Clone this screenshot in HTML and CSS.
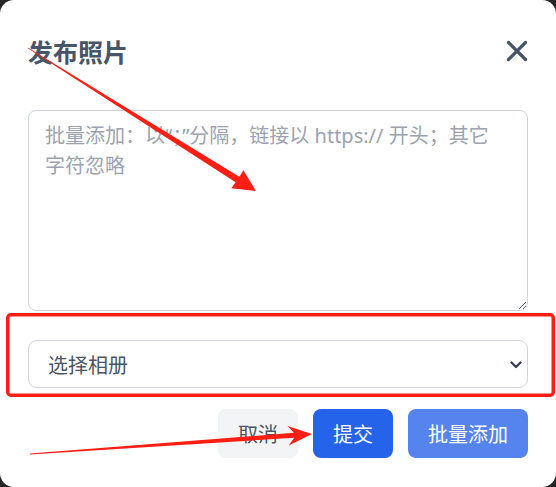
FILE: index.html
```html
<!DOCTYPE html>
<html lang="zh-CN">
<head>
<meta charset="utf-8">
<link rel="stylesheet" href="styles.css">
</head>
<body>
<div class="modal">
  <div class="header">
    <h2 class="title">发布照片</h2>
    <button class="close" aria-label="关闭">
      <svg width="22" height="22" viewBox="0 0 22 22"><path d="M2.5 2.5 L19.5 19.5 M19.5 2.5 L2.5 19.5" stroke="#475569" stroke-width="3.2" stroke-linecap="round"/></svg>
    </button>
  </div>
  <textarea class="links" placeholder="批量添加：以“；”分隔，链接以 https:// 开头；其它字符忽略"></textarea>
  <div class="select-wrap">
    <select class="album"><option>选择相册</option></select>
    <svg class="chev" width="12" height="8" viewBox="0 0 12 8"><path d="M1.5 1.5 L6 6 L10.5 1.5" fill="none" stroke="#374151" stroke-width="2.4" stroke-linecap="round" stroke-linejoin="round"/></svg>
  </div>
  <div class="actions">
    <button class="btn btn-cancel">取消</button>
    <button class="btn btn-primary">提交</button>
    <button class="btn btn-batch">批量添加</button>
  </div>
  <svg class="annot" width="556" height="487" viewBox="0 0 556 487">
    <rect x="7.75" y="314.75" width="545.5" height="80.5" rx="3" fill="none" stroke="#fe1f14" stroke-width="3.5"/>
    <polygon fill="#fe1f14" points="27.8,48.3 235.6,182.2 231.3,188.2 256,191 243.4,170.2 239.4,176.8 28.2,47.7"/>
    <polygon fill="#fe1f14" points="30,454.4 294.2,437.8 288.7,445.5 312,434 287.4,425.9 293.9,432.8 30,453.6"/>
  </svg>
</div>
</body>
</html>
```

FILE: styles.css
```css
* { box-sizing: border-box; }
html, body { margin: 0; padding: 0; }
body {
  width: 556px;
  height: 487px;
  background: #262626;
  font-family: "Noto Sans CJK SC", "Noto Sans", sans-serif;
  overflow: hidden;
}
.modal {
  position: relative;
  width: 556px;
  height: 487px;
  background: #ffffff;
  border-radius: 14px;
  padding: 33px 28px 0 28px;
  display: flex;
  flex-direction: column;
}
.header {
  display: flex;
  align-items: center;
  justify-content: space-between;
  height: 36px;
}
.title {
  margin: 0;
  font-size: 25px;
  line-height: 36px;
  font-weight: 700;
  color: #475569;
}
.close {
  border: 0;
  background: none;
  padding: 0;
  width: 22px;
  height: 22px;
  display: flex;
  cursor: pointer;
}
.links {
  margin-top: 41px;
  width: 500px;
  height: 201px;
  border: 1px solid #d1d5db;
  border-radius: 8px;
  padding: 10px 26px 10px 16px;
  font-family: "Noto Sans", "Noto Sans CJK SC", sans-serif;
  font-size: 20px;
  line-height: 30px;
  color: #374151;
  resize: vertical;
  outline: none;
}
.links::placeholder { color: #9ca3af; }
.select-wrap {
  position: relative;
  margin-top: 29px;
  width: 500px;
  height: 48px;
}
.album {
  appearance: none;
  -webkit-appearance: none;
  width: 100%;
  height: 48px;
  border: 1px solid #d1d5db;
  border-radius: 9px;
  background: #fff;
  padding: 0 40px 0 19px;
  font-family: "Noto Sans CJK SC", "Noto Sans", sans-serif;
  font-size: 20px;
  color: #4b5563;
  outline: none;
}
.chev {
  position: absolute;
  right: 6px;
  top: 21px;
}
.actions {
  margin-top: 21px;
  display: flex;
  justify-content: flex-end;
  gap: 15px;
}
.btn {
  height: 49px;
  padding: 0 20px;
  border: 0;
  border-radius: 8px;
  font-family: "Noto Sans CJK SC", "Noto Sans", sans-serif;
  font-size: 20px;
  line-height: 49px;
  cursor: pointer;
}
.btn-cancel { background: #f3f4f6; color: #4b5563; }
.btn-primary { background: #2563eb; color: #ffffff; }
.btn-batch { background: #5584ef; color: #ffffff; }
.annot {
  position: absolute;
  left: 0;
  top: 0;
  pointer-events: none;
}
```
